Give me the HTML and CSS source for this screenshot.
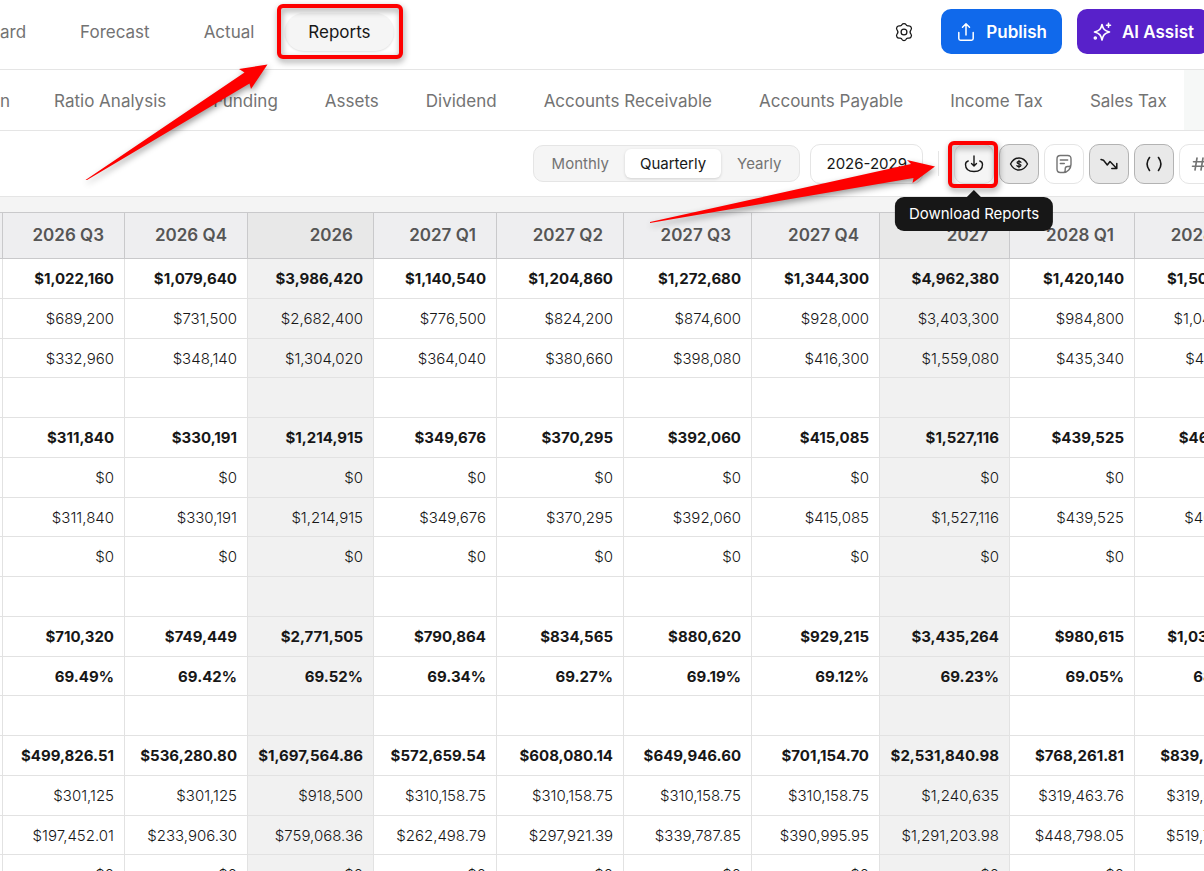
FILE: index.html
```
<!DOCTYPE html>
<html lang="en">
<head>
    <meta charset="UTF-8">
    <meta name="viewport" content="width=device-width, initial-scale=1.0">
    <title>Reports</title>
    <link rel="stylesheet" href="styles.css">
</head>
<body>
    <header class="topbar">
        <nav class="tabs">
            <a href="#" class="tab tab-cut">ard</a>
            <a href="#" class="tab">Forecast</a>
            <a href="#" class="tab">Actual</a>
            <a href="#" class="tab active">Reports</a>
        </nav>
        <div class="actions">
            <button class="gear" aria-label="Settings">
                <svg width="20" height="20" viewBox="0 0 24 24" fill="none" stroke="currentColor" stroke-width="1.5" stroke-linejoin="round"><path d="M12 1.8c1 0 1.9.4 2.3 1.3.5 1.2 1.6 1.8 2.9 1.6 1.8-.3 2.6.2 3.3 1.4.8 1.4.8 2.3-.3 3.6-1 1.2-1 3.4 0 4.600 1.100 1.300 1.100 2.200.3 3.600-.7 1.200-1.500 1.700-3.300 1.400-1.300-.2-2.400.4-2.900 1.600-.4.9-1.300 1.300-2.300 1.300s-1.900-.4-2.300-1.300c-.5-1.200-1.600-1.800-2.900-1.600-1.800.3-2.600-.2-3.300-1.400-.8-1.400-.8-2.300.3-3.600 1-1.200 1-3.400 0-4.600-1.100-1.300-1.100-2.200-.3-3.600.7-1.200 1.500-1.700 3.300-1.400 1.300.2 2.400-.4 2.900-1.600.4-.9 1.300-1.300 2.300-1.300z"/><circle cx="12" cy="12" r="3.5"/></svg>
            </button>
            <button class="btn publish">
                <svg width="20" height="20" viewBox="0 0 20 20" fill="none" stroke="currentColor" stroke-width="1.5" stroke-linecap="round" stroke-linejoin="round"><path d="M10 13V2M6.500 5.200L10 1.700l3.500 3.500M2.800 10.500v6c0 1 .7 1.700 1.700 1.700h11c1 0 1.700-.7 1.700-1.700v-6"/></svg>
                Publish
            </button>
            <button class="btn assist">
                <svg width="20" height="20" viewBox="0 0 20 20" fill="none" stroke="currentColor" stroke-width="1.6" stroke-linecap="round" stroke-linejoin="round"><path d="M10 2.500c1 4.500 2.500 6.200 7.500 7.500-5 1.300-6.500 3-7.500 8-1-5-2.500-6.700-7.500-8 5-1.300 6.500-3 7.500-7.500zM16.500 1.200v4M14.500 3.200h4"/><circle cx="3.3" cy="16" r="1"/></svg>
                AI Assist
            </button>
        </div>
    </header>

    <nav class="subnav">
        <div class="subnav-links">
            <a href="#">n</a>
            <a href="#">Ratio Analysis</a>
            <a href="#">Funding</a>
            <a href="#">Assets</a>
            <a href="#">Dividend</a>
            <a href="#">Accounts Receivable</a>
            <a href="#">Accounts Payable</a>
            <a href="#">Income Tax</a>
            <a href="#">Sales Tax</a>
        </div>
    </nav>

    <div class="toolbar">
        <div class="segmented">
            <button>Monthly</button>
            <button class="selected">Quarterly</button>
            <button>Yearly</button>
        </div>
        <button class="range">2026-2029</button>
        <span class="divider"></span>
        <div class="tools">
            <div class="tool-wrap">
                <button class="tool hover" aria-label="Download Reports" aria-describedby="download-tip">
                    <svg width="20" height="20" viewBox="0 0 20 20" fill="none" stroke="currentColor" stroke-width="1.4" stroke-linecap="round" stroke-linejoin="round"><path d="M10 2v9.500M7.500 9.500l2.500 2.500 2.500-2.500M4.200 7C2.400 7.600 1.500 8.600 1.500 10.500c0 4.500 3 7 8.500 7s8.500-2.500 8.500-7c0-1.900-.9-2.900-2.700-3.500"/></svg>
                </button>
                <div class="tooltip" id="download-tip" role="tooltip">Download Reports</div>
            </div>
            <button class="tool on" aria-label="Show currency">
                <svg width="20" height="20" viewBox="0 0 20 20" fill="none" stroke="currentColor" stroke-width="1.4" stroke-linecap="round" stroke-linejoin="round"><path d="M1.500 10C3.500 6.300 6.500 4 10 4s6.500 2.300 8.500 6c-2 3.700-5 6-8.500 6s-6.500-2.300-8.500-6z"/><path stroke-width="1.200" d="M12 8.300c-.4-.6-1.100-.9-2-.9-1.100 0-1.900.4-1.900 1.200 0 1.900 3.900.9 3.900 2.700 0 .8-.8 1.300-2 1.300-1 0-1.700-.3-2.100-1M10 6.300v7.400"/></svg>
            </button>
            <button class="tool muted" aria-label="Notes">
                <svg width="20" height="20" viewBox="0 0 20 20" fill="none" stroke="currentColor" stroke-width="1.4" stroke-linecap="round" stroke-linejoin="round"><path d="M17 10.500V5c0-2.300-1-3.500-3.300-3.500H6.300C4 1.500 3 2.700 3 5v10c0 2.300 1 3.500 3.300 3.500H9.500c4 0 7.500-4 7.500-8zM17 10.500c0 1.500-1 2-2.500 2h-1c-1.500 0-2.300.8-2.300 2.300v1.200c0 1.500-.5 2.500-1.700 2.500M6.300 6h7.400M6.300 9.500h4"/></svg>
            </button>
            <button class="tool on" aria-label="Trend">
                <svg width="20" height="20" viewBox="0 0 20 20" fill="none" stroke="currentColor" stroke-width="1.5" stroke-linecap="round" stroke-linejoin="round"><path d="M2 5.500l2.500.7 3.800 4.800 2.700-3.500 6.500 6.700M17.800 9.500v5h-5"/></svg>
            </button>
            <button class="tool on" aria-label="Negative in brackets">
                <svg width="20" height="20" viewBox="0 0 20 20" fill="none" stroke="currentColor" stroke-width="1.6" stroke-linecap="round"><path d="M5.500 3.500c-3 4-3 9 0 13M14.500 3.500c3 4 3 9 0 13"/></svg>
            </button>
            <button class="tool muted" aria-label="Decimals">
                <svg width="20" height="20" viewBox="0 0 20 20" fill="none" stroke="currentColor" stroke-width="1.6" stroke-linecap="round"><path d="M8 4L6 16M14 4l-2 12M4.500 7.800h12M3.500 12.300h12"/></svg>
            </button>
        </div>
    </div>

    <main class="report">
        <table>
            <colgroup>
                <col class="c-edge"><col class="c-q0"><col class="c-q1"><col class="c-year"><col class="c-q1"><col class="c-q2"><col class="c-q3"><col class="c-q3"><col class="c-year-wide"><col class="c-q4"><col class="c-q3">
            </colgroup>
            <thead>
                <tr><th></th><th>2026 Q3</th><th>2026 Q4</th><th class="year">2026</th><th>2027 Q1</th><th>2027 Q2</th><th>2027 Q3</th><th>2027 Q4</th><th class="year">2027</th><th>2028 Q1</th><th>2028 Q2</th></tr>
            </thead>
            <tbody>
                <tr class="total"><td></td><td>$1,022,160</td><td>$1,079,640</td><td class="year">$3,986,420</td><td>$1,140,540</td><td>$1,204,860</td><td>$1,272,680</td><td>$1,344,300</td><td class="year">$4,962,380</td><td>$1,420,140</td><td>$1,500,960</td></tr>
                <tr><td></td><td>$689,200</td><td>$731,500</td><td class="year">$2,682,400</td><td>$776,500</td><td>$824,200</td><td>$874,600</td><td>$928,000</td><td class="year">$3,403,300</td><td>$984,800</td><td>$1,045,200</td></tr>
                <tr><td></td><td>$332,960</td><td>$348,140</td><td class="year">$1,304,020</td><td>$364,040</td><td>$380,660</td><td>$398,080</td><td>$416,300</td><td class="year">$1,559,080</td><td>$435,340</td><td>$455,760</td></tr>
                <tr><td></td><td></td><td></td><td class="year"></td><td></td><td></td><td></td><td></td><td class="year"></td><td></td><td></td></tr>
                <tr class="total"><td></td><td>$311,840</td><td>$330,191</td><td class="year">$1,214,915</td><td>$349,676</td><td>$370,295</td><td>$392,060</td><td>$415,085</td><td class="year">$1,527,116</td><td>$439,525</td><td>$465,530</td></tr>
                <tr><td></td><td>$0</td><td>$0</td><td class="year">$0</td><td>$0</td><td>$0</td><td>$0</td><td>$0</td><td class="year">$0</td><td>$0</td><td>$0</td></tr>
                <tr><td></td><td>$311,840</td><td>$330,191</td><td class="year">$1,214,915</td><td>$349,676</td><td>$370,295</td><td>$392,060</td><td>$415,085</td><td class="year">$1,527,116</td><td>$439,525</td><td>$465,530</td></tr>
                <tr><td></td><td>$0</td><td>$0</td><td class="year">$0</td><td>$0</td><td>$0</td><td>$0</td><td>$0</td><td class="year">$0</td><td>$0</td><td>$0</td></tr>
                <tr><td></td><td></td><td></td><td class="year"></td><td></td><td></td><td></td><td></td><td class="year"></td><td></td><td></td></tr>
                <tr class="total"><td></td><td>$710,320</td><td>$749,449</td><td class="year">$2,771,505</td><td>$790,864</td><td>$834,565</td><td>$880,620</td><td>$929,215</td><td class="year">$3,435,264</td><td>$980,615</td><td>$1,035,430</td></tr>
                <tr class="total"><td></td><td>69.49%</td><td>69.42%</td><td class="year">69.52%</td><td>69.34%</td><td>69.27%</td><td>69.19%</td><td>69.12%</td><td class="year">69.23%</td><td>69.05%</td><td>68.98%</td></tr>
                <tr><td></td><td></td><td></td><td class="year"></td><td></td><td></td><td></td><td></td><td class="year"></td><td></td><td></td></tr>
                <tr class="total"><td></td><td>$499,826.51</td><td>$536,280.80</td><td class="year">$1,697,564.86</td><td>$572,659.54</td><td>$608,080.14</td><td>$649,946.60</td><td>$701,154.70</td><td class="year">$2,531,840.98</td><td>$768,261.81</td><td>$839,224.16</td></tr>
                <tr><td></td><td>$301,125</td><td>$301,125</td><td class="year">$918,500</td><td>$310,158.75</td><td>$310,158.75</td><td>$310,158.75</td><td>$310,158.75</td><td class="year">$1,240,635</td><td>$319,463.76</td><td>$319,463.76</td></tr>
                <tr><td></td><td>$197,452.01</td><td>$233,906.30</td><td class="year">$759,068.36</td><td>$262,498.79</td><td>$297,921.39</td><td>$339,787.85</td><td>$390,995.95</td><td class="year">$1,291,203.98</td><td>$448,798.05</td><td>$519,760.40</td></tr>
                <tr><td></td><td>$0</td><td>$0</td><td class="year">$0</td><td>$0</td><td>$0</td><td>$0</td><td>$0</td><td class="year">$0</td><td>$0</td><td>$0</td></tr>
            </tbody>
        </table>
    </main>

    <!-- red callouts over the page -->
    <svg class="callouts" width="1204" height="240" viewBox="0 0 1204 240" aria-hidden="true">
        <g fill="none" stroke="#fe0000" stroke-width="4">
            <rect x="279" y="6" width="122" height="51" rx="4"/>
            <rect x="950" y="143" width="46" height="43" rx="4"/>
        </g>
        <g fill="#fe0000">
            <path d="M85.500 180L244.500 72.500 239 69l28.500-4.500L251 89l-1.500-5.500L87 180z"/>
            <path d="M650 222l261-58-4-4 28 6.500L912.500 183l1-5L650 223z"/>
        </g>
    </svg>
</body>
</html>
```
FILE: styles.css
```
* {
    box-sizing: border-box;
}
body {
    margin: 0;
    height: 100vh;
    overflow: hidden;
    position: relative;
    display: flex;
    flex-direction: column;
    font-family: Inter, "Liberation Sans", sans-serif;
    background-color: #f4f4f4;
    color: #171717;
}
a {
    text-decoration: none;
    color: inherit;
}
button {
    font-family: inherit;
    color: inherit;
    padding: 0;
    border: none;
    background: none;
    cursor: pointer;
    flex-shrink: 0;
}
svg {
    display: block;
}
.topbar {
    height: 70px;
    flex-shrink: 0;
    display: flex;
    justify-content: space-between;
    background-color: #fff;
    border-bottom: 1px solid #e5e5e5;
    padding-bottom: 6px;
}
.tabs {
    display: flex;
    align-items: center;
    gap: 8px;
    font-size: 17px;
    color: #737373;
}
.tab {
    height: 38px;
    line-height: 38px;
    padding: 0 23px;
    border-radius: 19px;
}
.tab-cut {
    padding-left: 0;
}
.tab.active {
    background-color: #f5f5f5;
    color: #171717;
    box-shadow: 0 1px 2px rgba(0, 0, 0, 0.12);
}
.actions {
    display: flex;
    align-items: center;
    gap: 15px;
    margin-right: -5px;
}
.gear {
    margin-right: 12px;
}
.btn {
    height: 45px;
    display: flex;
    align-items: center;
    gap: 10px;
    padding: 0 15px;
    border-radius: 10px;
    color: #fff;
    font-size: 17px;
    font-weight: 600;
}
.publish {
    background-color: #1069eb;
}
.assist {
    background-color: #5821ca;
}
.subnav {
    height: 61px;
    flex-shrink: 0;
    background-color: #f6f8f7;
    border-bottom: 1px solid #e5e5e5;
    padding-right: 20px;
}
.subnav-links {
    height: 100%;
    display: flex;
    align-items: center;
    gap: 47px;
    padding-top: 2px;
    background-color: #fff;
    font-size: 17px;
    color: #737373;
    white-space: nowrap;
}
.subnav-links a:first-child {
    margin-right: -3px;
}
.toolbar {
    height: 66px;
    flex-shrink: 0;
    display: flex;
    align-items: center;
    justify-content: flex-end;
    background-color: #fff;
    border-bottom: 1px solid #e5e5e5;
    margin-right: -15px;
}
.segmented {
    display: flex;
    gap: 1px;
    height: 37px;
    padding: 3px;
    border: 1px solid #e5e5e5;
    border-radius: 10px;
    background-color: #f5f5f5;
    margin-right: 10px;
}
.segmented button {
    font-size: 15px;
    color: #737373;
    padding: 0 15px;
    border-radius: 6px;
}
.segmented .selected {
    background-color: #fff;
    color: #171717;
    box-shadow: 0 1px 3px rgba(0, 0, 0, 0.15);
}
.range {
    height: 40px;
    padding: 0 15px;
    border: 1px solid #e5e5e5;
    border-radius: 10px;
    font-size: 15px;
}
.divider {
    width: 1px;
    height: 25px;
    margin: 0 15px;
    background-color: #e5e5e5;
}
.tools {
    display: flex;
    gap: 5px;
}
.tool-wrap {
    position: relative;
}
.tool {
    width: 40px;
    height: 40px;
    display: flex;
    align-items: center;
    justify-content: center;
    border: 1px solid #e5e5e5;
    border-radius: 10px;
}
.tool.on {
    background-color: #e9e9e9;
    border-color: #b3b3b3;
}
.tool.hover {
    background-color: #f5f5f5;
}
.tool.muted {
    color: #737373;
}
.tooltip {
    position: absolute;
    top: 53px;
    left: 50%;
    transform: translateX(-50%);
    z-index: 2;
    height: 34px;
    line-height: 34px;
    padding: 0 14px;
    border-radius: 9px;
    background-color: #171717;
    color: #fff;
    font-size: 15px;
    white-space: nowrap;
}
.tooltip::before {
    content: "";
    position: absolute;
    top: -7px;
    left: 50%;
    margin-left: -7px;
    border: 7px solid transparent;
    border-top: none;
    border-bottom-color: #171717;
}
.report {
    flex: 1;
    min-height: 0;
    overflow: hidden;
    padding-top: 15px;
}
table {
    table-layout: fixed;
    width: 0;
    border-collapse: separate;
    border-spacing: 0;
    background-color: #fff;
}
.c-edge {
    width: 3px;
}
.c-q0 {
    width: 122px;
}
.c-q1 {
    width: 123px;
}
.c-q2 {
    width: 127px;
}
.c-q3 {
    width: 128px;
}
.c-q4 {
    width: 125px;
}
.c-year {
    width: 126px;
}
.c-year-wide {
    width: 130px;
}
th,
td {
    padding: 0 10px 0 0;
    text-align: right;
    white-space: nowrap;
    border-right: 1px solid #e2e2e2;
    border-bottom: 1px solid #e2e2e2;
}
th {
    height: 47px;
    padding: 0 20px 2px 0;
    font-size: 17px;
    font-weight: 600;
    color: #555;
    background-color: #eeeef0;
    border-top: 1px solid #c9c9cb;
    border-color: #c9c9cb;
}
th:first-child,
td:first-child {
    padding: 0;
}
td {
    height: 40px;
    font-size: 15px;
    font-weight: 300;
}
tr:nth-child(4n+3) td {
    height: 39px;
}
.total td {
    font-weight: 700;
}
td.year {
    background-color: #f1f1f1;
}
th.year {
    background-color: #e8e8e8;
}
.callouts {
    position: absolute;
    top: 0;
    left: 0;
    z-index: 3;
    pointer-events: none;
    filter: drop-shadow(1px 3px 3px rgba(0, 0, 0, 0.4));
}
```
